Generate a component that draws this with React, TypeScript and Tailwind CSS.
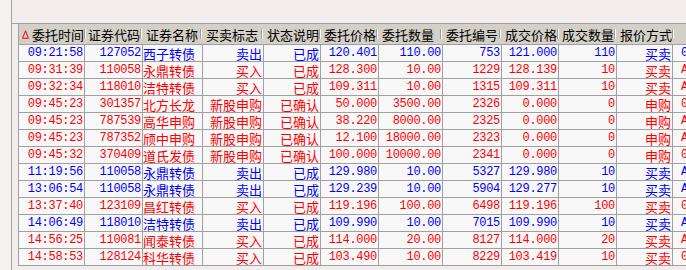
import React from "react";

type Order = {
  time: string;
  code: string;
  name: string;
  side: string;
  status: string;
  price: string;
  qty: string;
  no: string;
  dealPrice: string;
  dealQty: string;
  mode: string;
  account: string;
  sell: boolean;
};

const cols = [
  { title: "委托时间", w: "w-[66px]" },
  { title: "证券代码", w: "w-[58px]" },
  { title: "证券名称", w: "w-[60px]" },
  { title: "买卖标志", w: "w-[61px]" },
  { title: "状态说明", w: "w-[57px]" },
  { title: "委托价格", w: "w-[58px]" },
  { title: "委托数量", w: "w-[64px]" },
  { title: "委托编号", w: "w-[59px]" },
  { title: "成交价格", w: "w-[57px]" },
  { title: "成交数量", w: "w-[58px]" },
  { title: "报价方式", w: "w-[56px]" },
  { title: "", w: "w-[80px]" },
];

const orders: Order[] = [
  { time: "09:21:58", code: "127052", name: "西子转债", side: "卖出", status: "已成", price: "120.401", qty: "110.00", no: "753", dealPrice: "121.000", dealQty: "110", mode: "买卖", account: "0012345678", sell: true },
  { time: "09:31:39", code: "110058", name: "永鼎转债", side: "买入", status: "已成", price: "128.300", qty: "10.00", no: "1229", dealPrice: "128.139", dealQty: "10", mode: "买卖", account: "A123456789", sell: false },
  { time: "09:32:34", code: "118010", name: "洁特转债", side: "买入", status: "已成", price: "109.311", qty: "10.00", no: "1315", dealPrice: "109.311", dealQty: "10", mode: "买卖", account: "A123456789", sell: false },
  { time: "09:45:23", code: "301357", name: "北方长龙", side: "新股申购", status: "已确认", price: "50.000", qty: "3500.00", no: "2326", dealPrice: "0.000", dealQty: "0", mode: "申购", account: "0012345678", sell: false },
  { time: "09:45:23", code: "787539", name: "高华申购", side: "新股申购", status: "已确认", price: "38.220", qty: "8000.00", no: "2325", dealPrice: "0.000", dealQty: "0", mode: "申购", account: "A123456789", sell: false },
  { time: "09:45:23", code: "787352", name: "颀中申购", side: "新股申购", status: "已确认", price: "12.100", qty: "18000.00", no: "2323", dealPrice: "0.000", dealQty: "0", mode: "申购", account: "A123456789", sell: false },
  { time: "09:45:32", code: "370409", name: "道氏发债", side: "新股申购", status: "已确认", price: "100.000", qty: "10000.00", no: "2341", dealPrice: "0.000", dealQty: "0", mode: "申购", account: "0012345678", sell: false },
  { time: "11:19:56", code: "110058", name: "永鼎转债", side: "卖出", status: "已成", price: "129.980", qty: "10.00", no: "5327", dealPrice: "129.980", dealQty: "10", mode: "买卖", account: "A123456789", sell: true },
  { time: "13:06:54", code: "110058", name: "永鼎转债", side: "卖出", status: "已成", price: "129.239", qty: "10.00", no: "5904", dealPrice: "129.277", dealQty: "10", mode: "买卖", account: "A123456789", sell: true },
  { time: "13:37:40", code: "123109", name: "昌红转债", side: "买入", status: "已成", price: "119.196", qty: "100.00", no: "6498", dealPrice: "119.196", dealQty: "100", mode: "买卖", account: "0012345678", sell: false },
  { time: "14:06:49", code: "118010", name: "洁特转债", side: "卖出", status: "已成", price: "109.990", qty: "10.00", no: "7015", dealPrice: "109.990", dealQty: "10", mode: "买卖", account: "A123456789", sell: true },
  { time: "14:56:25", code: "110081", name: "闻泰转债", side: "买入", status: "已成", price: "114.000", qty: "20.00", no: "8127", dealPrice: "114.000", dealQty: "20", mode: "买卖", account: "A123456789", sell: false },
  { time: "14:58:53", code: "128124", name: "科华转债", side: "买入", status: "已成", price: "103.490", qty: "10.00", no: "8229", dealPrice: "103.419", dealQty: "10", mode: "买卖", account: "0012345678", sell: false },
];

const cjk = "[font-family:'Noto_Sans_CJK_SC',sans-serif] text-[13px]";
const mono = "[font-family:'Liberation_Mono',monospace] text-[12px] tracking-[-0.3px]";

function Cell({ w, font, left, children }: { w: string; font: string; left?: boolean; children: React.ReactNode }) {
  return (
    <div
      className={`${w} shrink-0 h-full border-r border-[#a0a0a0] overflow-hidden whitespace-nowrap flex items-center leading-[15px] ${
        left ? "justify-start" : "justify-end pr-[1px]"
      } ${font}`}
    >
      {children}
    </div>
  );
}

export default function App() {
  return (
    <div className="w-[686px] h-[270px] overflow-hidden flex bg-[#f3ecec]">
      <div className="w-[12px] shrink-0 bg-[#f7f2f2] border-r border-[#a8a0a0]" />

      <div className="flex-1 min-w-0 flex flex-col">
        <div className="h-[23px] shrink-0" />

        <div className="border-t border-[#a0a0a0] pl-[6px]">
          {/* header */}
          <div className="h-[21px] flex items-stretch border-l border-b border-[#a0a0a0] bg-[#d4d0c8] w-max">
            {cols.map((c, i) => (
              <div key={i} className={`${c.w} shrink-0 flex items-center pl-[3px] ${cjk} text-black leading-none`}>
                {i === 0 && (
                  <svg width="7" height="9" viewBox="0 0 7 9" className="mr-[3px] shrink-0">
                    <path d="M3.5 0.8 L6.4 8.3 L0.6 8.3 Z" fill="none" stroke="#ff0000" strokeWidth="1" />
                  </svg>
                )}
                {c.title && <span className="whitespace-nowrap">{c.title}</span>}
                {c.title && (
                  <span className="ml-auto mr-[1px] w-[2px] h-[10px] border-l border-[#a09c94] border-r border-r-white shrink-0" />
                )}
              </div>
            ))}
          </div>

          {/* rows */}
          <div className="border-l border-[#a0a0a0] w-max bg-[#f8f8f8]">
            {orders.map((o, i) => (
              <div
                key={i}
                className={`h-[17px] flex border-b border-[#a0a0a0] ${
                  o.sell ? "text-[#0000ff]" : "text-[#ff0000]"
                }`}
              >
                <Cell w="w-[66px]" font={mono}>{o.time}</Cell>
                <Cell w="w-[58px]" font={mono}>{o.code}</Cell>
                <Cell w="w-[60px]" font={cjk} left>{o.name}</Cell>
                <Cell w="w-[61px]" font={cjk}>{o.side}</Cell>
                <Cell w="w-[57px]" font={cjk}>{o.status}</Cell>
                <Cell w="w-[58px]" font={mono}>{o.price}</Cell>
                <Cell w="w-[64px]" font={mono}>{o.qty}</Cell>
                <Cell w="w-[59px]" font={mono}>{o.no}</Cell>
                <Cell w="w-[57px]" font={mono}>{o.dealPrice}</Cell>
                <Cell w="w-[58px]" font={mono}>{o.dealQty}</Cell>
                <Cell w="w-[56px]" font={cjk}>{o.mode}</Cell>
                <div className={`w-[80px] shrink-0 h-full flex items-center pl-[8px] leading-[15px] ${mono}`}>{o.account}</div>
              </div>
            ))}
          </div>
        </div>
      </div>
    </div>
  );
}
